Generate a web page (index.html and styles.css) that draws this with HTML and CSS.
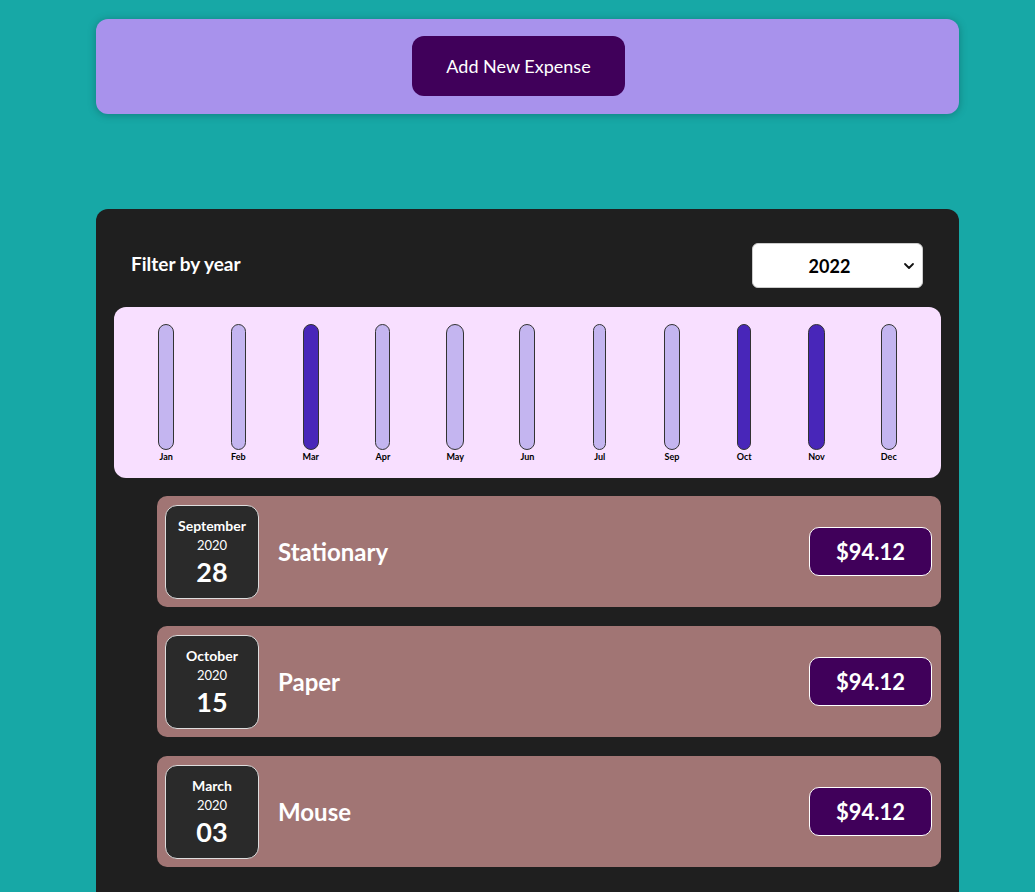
FILE: index.html
```html
<!DOCTYPE html>
<html lang="en">
<head>
<meta charset="utf-8">
<title>Expenses</title>
<link rel="stylesheet" href="styles.css">
</head>
<body>
<div class="page">
  <div class="new-expense">
    <button class="add-btn">Add New Expense</button>
  </div>

  <div class="expenses">
    <div class="filter">
      <span class="filter-label">Filter by year</span>
      <div class="select-wrap">
        <select class="year-select">
          <option>2022</option>
          <option>2021</option>
          <option>2020</option>
          <option>2019</option>
        </select>
        <svg class="chev" width="12" height="8" viewBox="0 0 12 8"><path d="M2 2l4 4 4-4" fill="none" stroke="#111" stroke-width="1.8" stroke-linecap="round" stroke-linejoin="round"/></svg>
      </div>
    </div>

    <div class="chart">
      <div class="col"><div class="bar" style="width:16px"></div><span>Jan</span></div>
      <div class="col"><div class="bar" style="width:15px"></div><span>Feb</span></div>
      <div class="col"><div class="bar dark" style="width:16px"></div><span>Mar</span></div>
      <div class="col"><div class="bar" style="width:15px"></div><span>Apr</span></div>
      <div class="col"><div class="bar" style="width:18px"></div><span>May</span></div>
      <div class="col"><div class="bar" style="width:16px"></div><span>Jun</span></div>
      <div class="col"><div class="bar" style="width:13px"></div><span>Jul</span></div>
      <div class="col"><div class="bar" style="width:16px"></div><span>Sep</span></div>
      <div class="col"><div class="bar dark" style="width:14px"></div><span>Oct</span></div>
      <div class="col"><div class="bar dark" style="width:17px"></div><span>Nov</span></div>
      <div class="col"><div class="bar" style="width:16px"></div><span>Dec</span></div>
    </div>

    <ul class="list">
      <li class="item">
        <div class="date">
          <div class="month">September</div>
          <div class="year">2020</div>
          <div class="day">28</div>
        </div>
        <h2 class="title">Stationary</h2>
        <div class="price">$94.12</div>
      </li>
      <li class="item">
        <div class="date">
          <div class="month">October</div>
          <div class="year">2020</div>
          <div class="day">15</div>
        </div>
        <h2 class="title">Paper</h2>
        <div class="price">$94.12</div>
      </li>
      <li class="item">
        <div class="date">
          <div class="month">March</div>
          <div class="year">2020</div>
          <div class="day">03</div>
        </div>
        <h2 class="title">Mouse</h2>
        <div class="price">$94.12</div>
      </li>
    </ul>
  </div>
</div>
</body>
</html>
```

FILE: styles.css
```css
* { box-sizing: border-box; }

html, body {
  margin: 0;
  padding: 0;
}

body {
  background: #17a8a6;
  font-family: Lato, "Noto Sans", sans-serif;
  color: #fff;
  overflow: hidden;
}

.page {
  width: 863px;
  margin: 19px 0 0 96px;
}

.new-expense {
  background: #a892ec;
  border-radius: 12px;
  padding: 17px 0 18px;
  display: flex;
  justify-content: center;
  box-shadow: 0 1px 8px rgba(0, 0, 0, 0.25);
}

.add-btn {
  width: 213px;
  height: 60px;
  margin-right: 18px;
  background: #40005a;
  color: #fff;
  border: none;
  border-radius: 12px;
  font-family: inherit;
  font-size: 18px;
  cursor: pointer;
}

.expenses {
  margin-top: 95px;
  background: #1f1f1f;
  border-radius: 12px;
  padding: 18px 18px 40px;
  height: 720px;
}

.filter {
  height: 80px;
  display: flex;
  align-items: center;
  justify-content: space-between;
  padding: 0 18px 0 17px;
}

.filter-label {
  font-weight: 700;
  font-size: 19px;
  margin-top: -8px;
}

.select-wrap {
  position: relative;
  width: 171px;
  height: 45px;
  margin-top: -3px;
}

.year-select {
  appearance: none;
  -webkit-appearance: none;
  width: 100%;
  height: 100%;
  background: #fff;
  border: 1px solid #ccc;
  border-radius: 6px;
  font-family: inherit;
  font-size: 18px;
  font-weight: 700;
  color: #000;
  text-align: center;
  text-align-last: center;
  padding: 0 16px 0 0;
}

.chev {
  position: absolute;
  right: 8px;
  top: 19px;
  pointer-events: none;
}

.chart {
  background: #f8dfff;
  border-radius: 12px;
  padding: 17px 16px 0;
  height: 171px;
  display: flex;
}

.col {
  flex: 1;
  display: flex;
  flex-direction: column;
  align-items: center;
}

.bar {
  height: 126px;
  background: #c4b5f0;
  border: 1px solid #333;
  border-radius: 10px;
}

.bar.dark {
  background: #4826b9;
}

.col span {
  color: #000;
  font-size: 9px;
  font-weight: 700;
  margin-top: 1px;
}

.list {
  list-style: none;
  margin: 18px 0 0;
  padding: 0 0 0 43px;
  display: flex;
  flex-direction: column;
  gap: 19px;
}

.item {
  height: 111px;
  background: #a17574;
  border-radius: 10px;
  display: flex;
  align-items: center;
  padding: 0 9px 0 8px;
}

.date {
  width: 94px;
  height: 94px;
  background: #2a2a2a;
  border: 1px solid #ddd;
  border-radius: 12px;
  display: flex;
  flex-direction: column;
  align-items: center;
  justify-content: center;
  padding-top: 2px;
}

.month {
  font-size: 14px;
  font-weight: 700;
  line-height: 18px;
}

.year {
  font-size: 13px;
  line-height: 20px;
}

.day {
  font-size: 27px;
  font-weight: 700;
  line-height: 34px;
}

.title {
  flex: 1;
  margin: 0 0 0 19px;
  font-size: 24px;
  font-weight: 700;
}

.price {
  width: 123px;
  height: 49px;
  background: #40005a;
  border: 1px solid #fff;
  border-radius: 10px;
  display: flex;
  align-items: center;
  justify-content: center;
  font-size: 22px;
  font-weight: 700;
}
```
